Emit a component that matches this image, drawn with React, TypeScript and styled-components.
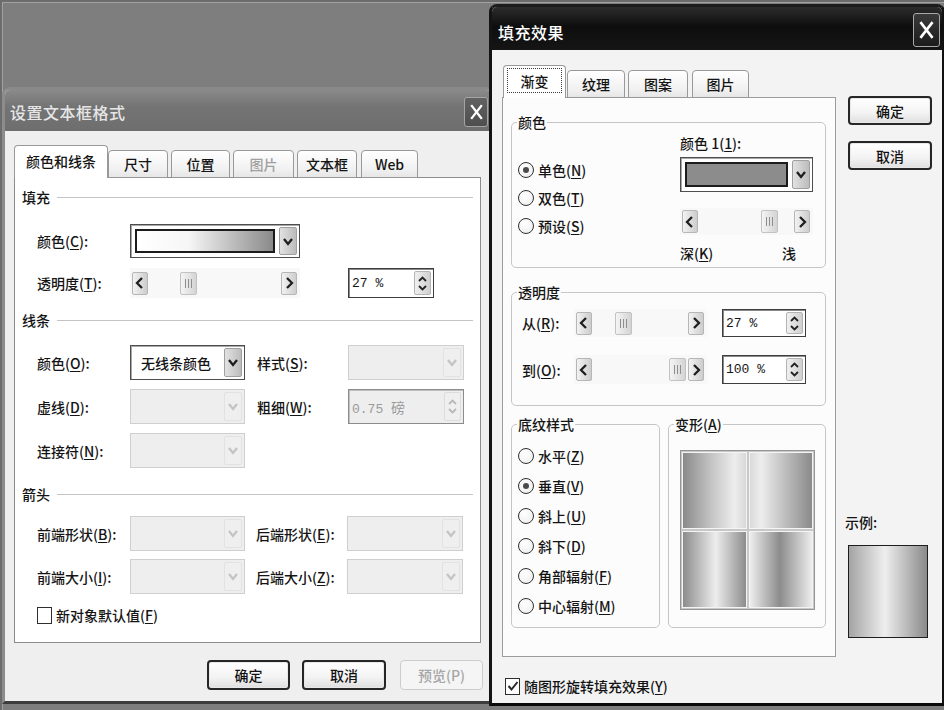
import React from 'react';
import styled, { createGlobalStyle, css } from 'styled-components';

const UI_FONT = `'Noto Sans CJK SC', 'Noto Sans', 'Liberation Sans', sans-serif`;
const NUM_FONT = `'Liberation Mono', 'DejaVu Sans Mono', monospace`;

const GlobalStyle = createGlobalStyle`
  * { box-sizing: border-box; }
  html, body { margin: 0; padding: 0; background: #7e7e7e; }
  body { font-family: ${UI_FONT}; font-size: 14px; font-weight: 500; color: #141414; }
`;

const Desktop = styled.main`
  position: relative;
  width: 944px;
  height: 710px;
  overflow: hidden;
  background: #7e7e7e;
  box-shadow: inset 0 2px 0 #6c6c6c, inset 2px 0 0 #6c6c6c, inset 0 3px 0 #a2a2a2,
    inset 3px 0 0 #a2a2a2;
`;

/* windows sit on the desktop at their own coordinates */
const Window = styled.section<{ $x: number; $y: number; $w: number; $h: number; $front?: boolean }>`
  position: absolute;
  left: ${(p) => p.$x}px;
  top: ${(p) => p.$y}px;
  width: ${(p) => p.$w}px;
  height: ${(p) => p.$h}px;
  display: flex;
  flex-direction: column;
  overflow: hidden;
  border: 3px solid;
  border-radius: 8px 8px 0 0;
  ${(p) =>
    p.$front
      ? css`
          border-color: #1c1c1c #101010 #0a0a0a #141414;
          background: #f3f3f3;
        `
      : css`
          border-color: #8a8a8a #6a6a6a #3c3c3c #8c8c8c;
          background: #efefef;
        `}
`;

const TitleBar = styled.header<{ $front?: boolean }>`
  flex: none;
  height: ${(p) => (p.$front ? 43 : 41)}px;
  display: flex;
  align-items: flex-start;
  justify-content: space-between;
  padding: 0 ${(p) => (p.$front ? 2 : 3)}px 0 ${(p) => (p.$front ? 6 : 5)}px;
  background: ${(p) =>
    p.$front
      ? 'linear-gradient(#2c2c2c, #0e0e0e 45%, #151515)'
      : 'linear-gradient(#8a8a8a, #747474 40%, #6e6e6e)'};
`;

const TitleText = styled.h1<{ $front?: boolean }>`
  margin: ${(p) => (p.$front ? 6 : 3)}px 0 0;
  align-self: center;
  font: 16px/1 ${UI_FONT};
  font-weight: 500;
  letter-spacing: 0.5px;
  color: ${(p) => (p.$front ? '#ffffff' : '#e6e6e6')};
`;

const CloseBox = styled.div<{ $front?: boolean }>`
  flex: none;
  width: ${(p) => (p.$front ? 27 : 24)}px;
  height: ${(p) => (p.$front ? 34 : 30)}px;
  margin-top: ${(p) => (p.$front ? 6 : 7)}px;
  display: flex;
  align-items: center;
  justify-content: center;
  border: 1px solid ${(p) => (p.$front ? '#a8a8a8' : '#a4a4a4')};
  border-radius: 3px;
  background: ${(p) => (p.$front ? 'linear-gradient(#3a3a3a, #1c1c1c)' : 'linear-gradient(#626262, #4e4e4e)')};
`;

const FormatBody = styled.div`
  flex: 1;
  display: flex;
  flex-direction: column;
  padding: 14px 10px 0 9px;
`;

const FillBody = styled.div`
  flex: 1;
  display: flex;
  align-items: flex-start;
  gap: 12px;
  padding: 15px 0 0 10px;
`;

const TabStrip = styled.div`
  position: relative;
  z-index: 1;
  display: flex;
  align-items: flex-end;
  height: 33px;
  margin-bottom: -1px;
`;

const Tab = styled.div<{ $w: number; $ml?: number; $active?: boolean; $disabled?: boolean }>`
  flex: none;
  width: ${(p) => p.$w}px;
  margin-left: ${(p) => p.$ml ?? 0}px;
  height: ${(p) => (p.$active ? 33 : 28)}px;
  display: flex;
  align-items: center;
  justify-content: center;
  border: 1px solid #999999;
  border-radius: 4px 4px 0 0;
  font-size: 14px;
  color: ${(p) => (p.$disabled ? '#a0a0a0' : '#141414')};
  ${(p) =>
    p.$active
      ? css`
          border-bottom: none;
          background: #ffffff;
          padding-bottom: 3px;
        `
      : css`
          background: linear-gradient(#ffffff, #f1f1f1 70%, #e6e6e6);
        `}
`;

const FocusRing = styled.span`
  width: calc(100% - 6px);
  height: 25px;
  display: flex;
  align-items: center;
  justify-content: center;
  border: 1px dotted #3a3a3a;
`;

const Panel = styled.div<{ $h: number; $pad: string; $soft?: boolean }>`
  flex: none;
  height: ${(p) => p.$h}px;
  display: flex;
  flex-direction: column;
  padding: ${(p) => p.$pad};
  border: 1px solid ${(p) => (p.$soft ? '#9c9c9c' : '#8c8c8c')};
  background: ${(p) => (p.$soft ? '#fcfcfc' : '#ffffff')};
`;

const SectionHead = styled.div<{ $mt?: number }>`
  display: flex;
  align-items: center;
  height: 18px;
  margin-top: ${(p) => p.$mt ?? 0}px;
  font-size: 14px;
  &::after {
    content: '';
    flex: 1;
    height: 1px;
    margin-left: 7px;
    background: #c4c4c4;
  }
`;

const FormRow = styled.div<{ $mt: number; $h: number }>`
  display: flex;
  align-items: center;
  height: ${(p) => p.$h}px;
  margin-top: ${(p) => p.$mt}px;
  padding-left: 15px;
`;

const FieldLabel = styled.span<{ $w: number; $ml?: number }>`
  flex: none;
  width: ${(p) => p.$w}px;
  margin-left: ${(p) => p.$ml ?? 0}px;
  white-space: nowrap;
  font-size: 14px;
`;

const Key = styled.u`
  text-decoration: underline;
  text-underline-offset: 2px;
`;

const ComboFrame = styled.div<{ $w: number; $h: number; $disabled?: boolean }>`
  flex: none;
  width: ${(p) => p.$w}px;
  height: ${(p) => p.$h}px;
  display: flex;
  align-items: stretch;
  gap: 2px;
  padding: 2px;
  border: 1px solid ${(p) => (p.$disabled ? '#cfcfcf' : '#4e4e4e')};
  box-shadow: ${(p) => (p.$disabled ? 'none' : 'inset 1px 1px 0 #a8a8a8')};
  background: ${(p) => (p.$disabled ? '#eeeeee' : '#ffffff')};
`;

const ComboValue = styled.div`
  flex: 1;
  display: flex;
  align-items: center;
  padding-left: 8px;
  white-space: nowrap;
  font-size: 14px;
`;

const ComboSwatch = styled.div<{ $fill: string }>`
  flex: 1;
  margin: 2px;
  border: 2px solid #1c1c1c;
  background: ${(p) => p.$fill};
`;

const DropButton = styled.div<{ $disabled?: boolean }>`
  flex: none;
  width: 18px;
  display: flex;
  align-items: center;
  justify-content: center;
  border-radius: 2px;
  border: 1px solid ${(p) => (p.$disabled ? '#e2e2e2' : '#a0a0a0')};
  background: ${(p) => (p.$disabled ? '#efefef' : 'linear-gradient(90deg, #e2e2e2, #bcbcbc)')};
`;

const ScrollTrack = styled.div<{ $w: number; $h: number }>`
  flex: none;
  width: ${(p) => p.$w}px;
  height: ${(p) => p.$h}px;
  display: flex;
  align-items: center;
  padding: 0 3px 0 2px;
  background: #f8f8f8;
`;

const ScrollButton = styled.div`
  flex: none;
  width: 16px;
  height: 23px;
  display: flex;
  align-items: center;
  justify-content: center;
  border: 1px solid #b6b6b6;
  border-radius: 2px;
  background: linear-gradient(90deg, #f2f2f2, #cdcdcd);
`;

const ScrollThumb = styled.div<{ $at: number }>`
  flex: none;
  width: 17px;
  height: 23px;
  margin-left: ${(p) => p.$at}px;
  margin-right: auto;
  display: flex;
  align-items: center;
  justify-content: center;
  border: 1px solid #c2c2c2;
  border-radius: 2px;
  background: linear-gradient(90deg, #f4f4f4, #d4d4d4);
  &::after {
    content: '';
    width: 7px;
    height: 9px;
    background: repeating-linear-gradient(90deg, #8e8e8e 0 1px, transparent 1px 3px);
  }
`;

const SpinBox = styled.div<{ $w: number; $h: number; $ml?: number; $disabled?: boolean }>`
  flex: none;
  width: ${(p) => p.$w}px;
  height: ${(p) => p.$h}px;
  margin-left: ${(p) => p.$ml ?? 0}px;
  display: flex;
  align-items: center;
  padding: 2px 2px 2px 3px;
  border: 1px solid ${(p) => (p.$disabled ? '#8c8c8c' : '#3e3e3e')};
  box-shadow: inset 1px 1px 0 ${(p) => (p.$disabled ? '#c0c0c0' : '#8a8a8a')};
  background: ${(p) => (p.$disabled ? '#eeeeee' : '#ffffff')};
  color: ${(p) => (p.$disabled ? '#9a9a9a' : '#161616')};
  font: 13px ${NUM_FONT};
`;

const SpinValue = styled.span`
  flex: 1;
  white-space: nowrap;
  & > em {
    font-style: normal;
    font-family: ${UI_FONT};
    font-size: 14px;
  }
`;

const SpinArrows = styled.div<{ $disabled?: boolean }>`
  flex: none;
  width: 17px;
  height: 100%;
  display: flex;
  flex-direction: column;
  align-items: center;
  justify-content: center;
  gap: 3px;
  border-radius: 2px;
  border: 1px solid ${(p) => (p.$disabled ? '#dcdcdc' : '#b4b4b4')};
  background: ${(p) => (p.$disabled ? '#efefef' : 'linear-gradient(90deg, #f0f0f0, #cfcfcf)')};
`;

const PushButton = styled.button<{ $w: number; $h: number; $disabled?: boolean }>`
  flex: none;
  width: ${(p) => p.$w}px;
  height: ${(p) => p.$h}px;
  padding: 0;
  border-radius: 4px;
  font: 500 14px ${UI_FONT};
  ${(p) =>
    p.$disabled
      ? css`
          border: 1px solid #cdcdcd;
          background: #f5f5f5;
          color: #a6a6a6;
        `
      : css`
          border: 2px solid #262626;
          background: linear-gradient(#ffffff, #f3f3f3 60%, #dedede);
          box-shadow: inset 0 0 0 1px #e8e8e8;
          color: #111111;
        `}
`;

const ButtonRow = styled.div`
  display: flex;
  justify-content: flex-end;
  gap: 12px;
  margin: 17px -2px 0 0;
  & > :last-child {
    margin-left: 2px;
  }
`;

const CheckRow = styled.label<{ $mt: number; $pl: number }>`
  display: flex;
  align-items: center;
  gap: 4px;
  height: 18px;
  margin-top: ${(p) => p.$mt}px;
  padding-left: ${(p) => p.$pl}px;
  font-size: 14px;
`;

const CheckBox = styled.span`
  flex: none;
  width: 15px;
  height: 17px;
  display: flex;
  align-items: center;
  justify-content: center;
  border: 1px solid #2e2e2e;
  background: #ffffff;
`;

const GroupBox = styled.fieldset<{ $h: number; $w?: number; $mt?: number }>`
  flex: none;
  min-width: 0;
  width: ${(p) => (p.$w ? `${p.$w}px` : 'auto')};
  height: ${(p) => p.$h}px;
  margin: ${(p) => p.$mt ?? 0}px 0 0;
  padding: 0;
  border: 1px solid #c6c6c6;
  border-radius: 5px;
`;

const GroupLegend = styled.legend`
  margin-left: 5px;
  padding: 0 1px;
  font-size: 14px;
  line-height: 18px;
`;

const ColorGroupGrid = styled.div`
  display: grid;
  grid-template-columns: 162px 1fr;
  padding-left: 6px;
`;

const RadioColumn = styled.div<{ $pt: number; $pl?: number; $row: number }>`
  display: flex;
  flex-direction: column;
  padding: ${(p) => p.$pt}px 0 0 ${(p) => p.$pl ?? 0}px;
  & > * {
    height: ${(p) => p.$row}px;
  }
`;

const RadioItem = styled.label`
  display: flex;
  align-items: center;
  gap: 4px;
  white-space: nowrap;
  font-size: 14px;
`;

const RadioCircle = styled.span<{ $checked?: boolean }>`
  position: relative;
  flex: none;
  width: 16px;
  height: 16px;
  border: 1px solid #2f2f2f;
  border-radius: 50%;
  background: radial-gradient(circle at 40% 35%, #ffffff, #ececec);
  ${(p) =>
    p.$checked &&
    css`
      &::after {
        content: '';
        position: absolute;
        left: 4px;
        top: 4px;
        width: 6px;
        height: 6px;
        border-radius: 50%;
        background: #4a4a4a;
      }
    `}
`;

const StackColumn = styled.div`
  display: flex;
  flex-direction: column;
  padding: 4px 13px 0 0;
`;

const SmallLine = styled.div<{ $mt?: number }>`
  display: flex;
  align-items: center;
  justify-content: space-between;
  height: 16px;
  margin-top: ${(p) => p.$mt ?? 0}px;
  padding-right: 17px;
  white-space: nowrap;
  font-size: 14px;
`;

const Stacked = styled.div<{ $mt: number }>`
  margin-top: ${(p) => p.$mt}px;
`;

const TransRow = styled.div<{ $mt: number; $h: number }>`
  display: flex;
  align-items: center;
  height: ${(p) => p.$h}px;
  margin-top: ${(p) => p.$mt}px;
  padding-left: 10px;
`;

const GroupRow = styled.div`
  display: flex;
  gap: 8px;
  margin-top: 9px;
`;

const VariantsArea = styled.div`
  padding: 17px 0 0 11px;
`;

const VariantGrid = styled.div`
  width: 135px;
  height: 160px;
  display: grid;
  grid-template-columns: 1fr 1fr;
  grid-template-rows: 1fr 1fr;
  gap: 2px;
  padding: 1px;
  border: 1px solid #959595;
  background: #c8c8c8;
`;

const VariantCell = styled.div<{ $fill: string }>`
  border: 1px solid #f4f4f4;
  background: ${(p) => p.$fill};
`;

const LeftColumn = styled.div`
  display: flex;
  flex-direction: column;
  width: 334px;
`;

const SideColumn = styled.div`
  display: flex;
  flex-direction: column;
  width: 84px;
  padding-top: 31px;
  & > button + button {
    margin-top: 16px;
  }
`;

const SampleLabel = styled.div`
  height: 16px;
  margin: 344px 0 0 -3px;
  font-size: 14px;
  line-height: 16px;
`;

const SampleBox = styled.div<{ $fill: string }>`
  width: 80px;
  height: 93px;
  margin-top: 15px;
  border: 1px solid #1e1e1e;
  background: ${(p) => p.$fill};
`;

/* ---- drawings ---- */

const CloseIcon = ({ size }: { size: number }) => (
  <svg width={size} height={size + 3} viewBox="0 0 14 17">
    <path d="M2 2 L12 15 M12 2 L2 15" stroke="#ffffff" strokeWidth="2.4" strokeLinecap="square" />
  </svg>
);

const Chevron = ({ dir, color = '#1e1e1e' }: { dir: 'down' | 'left' | 'right'; color?: string }) => {
  const d = dir === 'down' ? 'M1 2 L5 7 L9 2' : dir === 'left' ? 'M7 1 L2 6 L7 11' : 'M3 1 L8 6 L3 11';
  const horiz = dir === 'down';
  return (
    <svg width={10} height={horiz ? 9 : 12} viewBox={horiz ? '0 0 10 9' : '0 0 10 12'}>
      <path d={d} fill="none" stroke={color} strokeWidth="2.3" />
    </svg>
  );
};

const SpinChevron = ({ dir, color }: { dir: 'up' | 'down'; color: string }) => (
  <svg width="9" height="6" viewBox="0 0 9 6">
    <path d={dir === 'up' ? 'M1 5 L4.5 1.5 L8 5' : 'M1 1 L4.5 4.5 L8 1'} fill="none" stroke={color} strokeWidth="1.8" />
  </svg>
);

const CheckMark = () => (
  <svg width="12" height="12" viewBox="0 0 12 12">
    <path d="M1.5 6 L4.5 9.5 L10.5 2" fill="none" stroke="#2a2a2a" strokeWidth="2" />
  </svg>
);

/* ---- small composed controls ---- */

const Mn = ({ t, k, colon }: { t: string; k?: string; colon?: boolean }) => (
  <>
    {t}
    {k && (
      <>
        (<Key>{k}</Key>)
      </>
    )}
    {colon && ':'}
  </>
);

const Combo = ({
  w,
  h = 35,
  disabled,
  value,
  fill,
}: {
  w: number;
  h?: number;
  disabled?: boolean;
  value?: string;
  fill?: string;
}) => (
  <ComboFrame $w={w} $h={h} $disabled={disabled}>
    {fill ? <ComboSwatch $fill={fill} /> : <ComboValue>{value}</ComboValue>}
    <DropButton $disabled={disabled}>
      <Chevron dir="down" color={disabled ? '#c4c4c4' : '#1e1e1e'} />
    </DropButton>
  </ComboFrame>
);

const Slider = ({ w, h, at }: { w: number; h: number; at: number }) => (
  <ScrollTrack $w={w} $h={h}>
    <ScrollButton>
      <Chevron dir="left" />
    </ScrollButton>
    <ScrollThumb $at={at} />
    <ScrollButton>
      <Chevron dir="right" />
    </ScrollButton>
  </ScrollTrack>
);

const Spin = ({
  w,
  h,
  ml,
  disabled,
  children,
}: {
  w: number;
  h: number;
  ml?: number;
  disabled?: boolean;
  children: React.ReactNode;
}) => (
  <SpinBox $w={w} $h={h} $ml={ml} $disabled={disabled}>
    <SpinValue>{children}</SpinValue>
    <SpinArrows $disabled={disabled}>
      <SpinChevron dir="up" color={disabled ? '#b8b8b8' : '#222'} />
      <SpinChevron dir="down" color={disabled ? '#b8b8b8' : '#222'} />
    </SpinArrows>
  </SpinBox>
);

/* ---- 设置文本框格式 ---- */

const formatTabs = [
  { label: '颜色和线条', w: 94, ml: 0, active: true },
  { label: '尺寸', w: 60, ml: 0 },
  { label: '位置', w: 59, ml: 3 },
  { label: '图片', w: 61, ml: 3, disabled: true },
  { label: '文本框', w: 60, ml: 3 },
  { label: 'Web', w: 57, ml: 4 },
];

function FormatDialog() {
  return (
    <Window $x={2} $y={87} $w={492} $h={617}>
      <TitleBar>
        <TitleText>设置文本框格式</TitleText>
        <CloseBox>
          <CloseIcon size={13} />
        </CloseBox>
      </TitleBar>
      <FormatBody>
        <TabStrip>
          {formatTabs.map((t) => (
            <Tab key={t.label} $w={t.w} $ml={t.ml} $active={t.active} $disabled={t.disabled}>
              {t.label}
            </Tab>
          ))}
        </TabStrip>
        <Panel $h={466} $pad="10px 7px 0">
          <SectionHead>填充</SectionHead>
          <FormRow $mt={18} $h={34}>
            <FieldLabel $w={93}>
              <Mn t="颜色" k="C" colon />
            </FieldLabel>
            <Combo w={170} h={34} fill="linear-gradient(90deg, #ffffff 0%, #f6f6f6 38%, #8a8a8a 100%)" />
          </FormRow>
          <FormRow $mt={10} $h={30}>
            <FieldLabel $w={93}>
              <Mn t="透明度" k="T" colon />
            </FieldLabel>
            <Slider w={170} h={30} at={32} />
            <Spin w={86} h={30} ml={48}>
              27 %
            </Spin>
          </FormRow>

          <SectionHead $mt={13}>线条</SectionHead>
          <FormRow $mt={16} $h={35}>
            <FieldLabel $w={93}>
              <Mn t="颜色" k="O" colon />
            </FieldLabel>
            <Combo w={115} value="无线条颜色" />
            <FieldLabel $w={91} $ml={12}>
              <Mn t="样式" k="S" colon />
            </FieldLabel>
            <Combo w={116} disabled />
          </FormRow>
          <FormRow $mt={9} $h={35}>
            <FieldLabel $w={93}>
              <Mn t="虚线" k="D" colon />
            </FieldLabel>
            <Combo w={115} disabled />
            <FieldLabel $w={91} $ml={12}>
              <Mn t="粗细" k="W" colon />
            </FieldLabel>
            <Spin w={116} h={35} disabled>
              0.75 <em>磅</em>
            </Spin>
          </FormRow>
          <FormRow $mt={9} $h={35}>
            <FieldLabel $w={93}>
              <Mn t="连接符" k="N" colon />
            </FieldLabel>
            <Combo w={115} disabled />
          </FormRow>

          <SectionHead $mt={17}>箭头</SectionHead>
          <FormRow $mt={13} $h={35}>
            <FieldLabel $w={93}>
              <Mn t="前端形状" k="B" colon />
            </FieldLabel>
            <Combo w={115} disabled />
            <FieldLabel $w={91} $ml={11}>
              <Mn t="后端形状" k="E" colon />
            </FieldLabel>
            <Combo w={116} disabled />
          </FormRow>
          <FormRow $mt={8} $h={35}>
            <FieldLabel $w={93}>
              <Mn t="前端大小" k="I" colon />
            </FieldLabel>
            <Combo w={115} disabled />
            <FieldLabel $w={91} $ml={11}>
              <Mn t="后端大小" k="Z" colon />
            </FieldLabel>
            <Combo w={116} disabled />
          </FormRow>
          <CheckRow $mt={12} $pl={15}>
            <CheckBox />
            <span>
              <Mn t="新对象默认值" k="F" />
            </span>
          </CheckRow>
        </Panel>
        <ButtonRow>
          <PushButton $w={83} $h={30}>
            确定
          </PushButton>
          <PushButton $w={84} $h={30}>
            取消
          </PushButton>
          <PushButton $w={83} $h={30} $disabled>
            预览(P)
          </PushButton>
        </ButtonRow>
      </FormatBody>
    </Window>
  );
}

/* ---- 填充效果 ---- */

const fillTabs = [
  { label: '渐变', w: 63, ml: 1, active: true },
  { label: '纹理', w: 58, ml: 1 },
  { label: '图案', w: 60, ml: 3 },
  { label: '图片', w: 57, ml: 4 },
];

const shadingStyles = [
  { t: '水平', k: 'Z' },
  { t: '垂直', k: 'V', checked: true },
  { t: '斜上', k: 'U' },
  { t: '斜下', k: 'D' },
  { t: '角部辐射', k: 'F' },
  { t: '中心辐射', k: 'M' },
];

const variantFills = [
  'linear-gradient(90deg, #8a8a8a 0%, #c4c4c4 45%, #ededed 82%, #d8d8d8 100%)',
  'linear-gradient(90deg, #dadada 0%, #ededed 18%, #c0c0c0 55%, #8a8a8a 100%)',
  'linear-gradient(90deg, #8c8c8c 0%, #ededed 52%, #8c8c8c 100%)',
  'linear-gradient(90deg, #ededed 0%, #8c8c8c 48%, #ededed 100%)',
];

function FillEffectsDialog() {
  return (
    <Window $x={489} $y={4} $w={456} $h={702} $front>
      <TitleBar $front>
        <TitleText $front>填充效果</TitleText>
        <CloseBox $front>
          <CloseIcon size={15} />
        </CloseBox>
      </TitleBar>
      <FillBody>
        <LeftColumn>
          <TabStrip>
            {fillTabs.map((t) => (
              <Tab key={t.label} $w={t.w} $ml={t.ml} $active={t.active}>
                {t.active ? <FocusRing>{t.label}</FocusRing> : t.label}
              </Tab>
            ))}
          </TabStrip>
          <Panel $h={560} $pad="15px 9px 0 8px" $soft>
            <GroupBox $h={155}>
              <GroupLegend>颜色</GroupLegend>
              <ColorGroupGrid>
                <RadioColumn $pt={25} $row={28}>
                  <RadioItem>
                    <RadioCircle $checked />
                    <span>
                      <Mn t="单色" k="N" />
                    </span>
                  </RadioItem>
                  <RadioItem>
                    <RadioCircle />
                    <span>
                      <Mn t="双色" k="T" />
                    </span>
                  </RadioItem>
                  <RadioItem>
                    <RadioCircle />
                    <span>
                      <Mn t="预设" k="S" />
                    </span>
                  </RadioItem>
                </RadioColumn>
                <StackColumn>
                  <SmallLine>
                    <span>
                      <Mn t="颜色 1" k="1" colon />
                    </span>
                  </SmallLine>
                  <Stacked $mt={6}>
                    <Combo w={133} fill="#8c8c8c" />
                  </Stacked>
                  <Stacked $mt={16}>
                    <Slider w={133} h={27} at={63} />
                  </Stacked>
                  <SmallLine $mt={10}>
                    <span>
                      <Mn t="深" k="K" />
                    </span>
                    <span>浅</span>
                  </SmallLine>
                </StackColumn>
              </ColorGroupGrid>
            </GroupBox>

            <GroupBox $h={123} $mt={15}>
              <GroupLegend>透明度</GroupLegend>
              <TransRow $mt={8} $h={28}>
                <FieldLabel $w={52}>
                  <Mn t="从" k="R" colon />
                </FieldLabel>
                <Slider w={133} h={28} at={23} />
                <Spin w={84} h={28} ml={15}>
                  27 %
                </Spin>
              </TransRow>
              <TransRow $mt={18} $h={29}>
                <FieldLabel $w={52}>
                  <Mn t="到" k="O" colon />
                </FieldLabel>
                <Slider w={133} h={29} at={77} />
                <Spin w={84} h={29} ml={15}>
                  100 %
                </Spin>
              </TransRow>
            </GroupBox>

            <GroupRow>
              <GroupBox $w={149} $h={213}>
                <GroupLegend>底纹样式</GroupLegend>
                <RadioColumn $pt={8} $pl={6} $row={30}>
                  {shadingStyles.map((s) => (
                    <RadioItem key={s.k}>
                      <RadioCircle $checked={s.checked} />
                      <span>
                        <Mn t={s.t} k={s.k} />
                      </span>
                    </RadioItem>
                  ))}
                </RadioColumn>
              </GroupBox>
              <GroupBox $w={158} $h={213}>
                <GroupLegend>
                  <Mn t="变形" k="A" />
                </GroupLegend>
                <VariantsArea>
                  <VariantGrid>
                    {variantFills.map((f, i) => (
                      <VariantCell key={i} $fill={f} />
                    ))}
                  </VariantGrid>
                </VariantsArea>
              </GroupBox>
            </GroupRow>
          </Panel>
          <CheckRow $mt={20} $pl={3}>
            <CheckBox>
              <CheckMark />
            </CheckBox>
            <span>
              <Mn t="随图形旋转填充效果" k="Y" />
            </span>
          </CheckRow>
        </LeftColumn>
        <SideColumn>
          <PushButton $w={84} $h={29}>
            确定
          </PushButton>
          <PushButton $w={84} $h={29}>
            取消
          </PushButton>
          <SampleLabel>示例:</SampleLabel>
          <SampleBox $fill="linear-gradient(90deg, #a4a4a4 0%, #eeeeee 46%, #8a8a8a 100%)" />
        </SideColumn>
      </FillBody>
    </Window>
  );
}

export default function App() {
  return (
    <>
      <GlobalStyle />
      <Desktop>
        <FormatDialog />
        <FillEffectsDialog />
      </Desktop>
    </>
  );
}
